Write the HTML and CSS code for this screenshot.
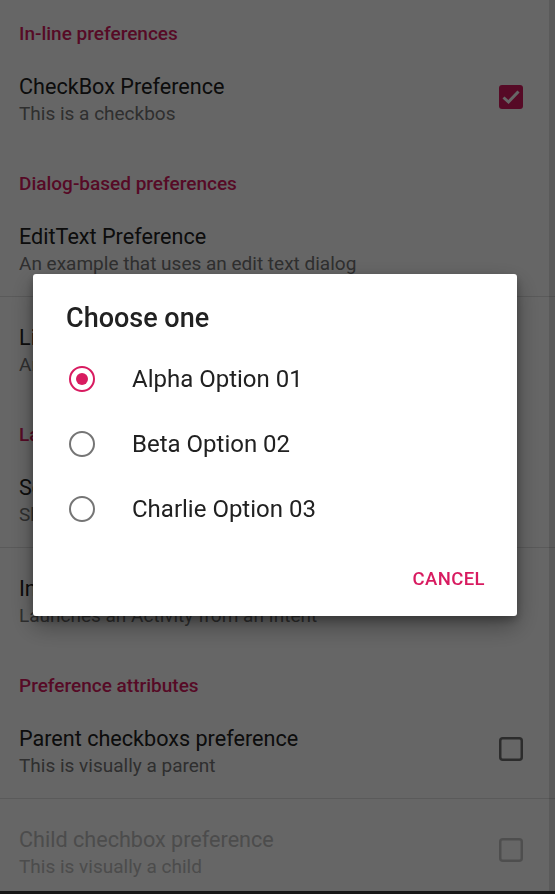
FILE: index.html
```html
<!DOCTYPE html>
<html>
<head>
<meta charset="utf-8">
<link rel="stylesheet" href="styles.css">
</head>
<body>
<div class="screen">
  <div class="list">
    <div class="category">In-line preferences</div>
    <div class="pref">
      <div class="pref-text">
        <div class="pref-title">CheckBox Preference</div>
        <div class="pref-summary">This is a checkbos</div>
      </div>
      <svg class="checkbox" width="24" height="24" viewBox="0 0 24 24">
        <rect x="0" y="0" width="24" height="24" rx="3" fill="#D81B60"/>
        <path d="M4.5 12.5 L9.5 17 L19.5 6.5" fill="none" stroke="#fff" stroke-width="3"/>
      </svg>
    </div>
    <div class="category">Dialog-based preferences</div>
    <div class="pref divided">
      <div class="pref-text">
        <div class="pref-title">EditText Preference</div>
        <div class="pref-summary">An example that uses an edit text dialog</div>
      </div>
    </div>
    <div class="pref">
      <div class="pref-text">
        <div class="pref-title">List Preference</div>
        <div class="pref-summary">An example that uses a list dialog</div>
      </div>
    </div>
    <div class="category">Launch preferences</div>
    <div class="pref divided">
      <div class="pref-text">
        <div class="pref-title">Screen preference</div>
        <div class="pref-summary">Shows another screen of preferences</div>
      </div>
    </div>
    <div class="pref">
      <div class="pref-text">
        <div class="pref-title">Intent preference</div>
        <div class="pref-summary">Launches an Activity from an Intent</div>
      </div>
    </div>
    <div class="category">Preference attributes</div>
    <div class="pref divided">
      <div class="pref-text">
        <div class="pref-title">Parent checkboxs preference</div>
        <div class="pref-summary">This is visually a parent</div>
      </div>
      <svg class="checkbox" width="24" height="24" viewBox="0 0 24 24">
        <rect x="1.25" y="1.25" width="21.5" height="21.5" rx="2.5" fill="none" stroke="#6e6e6e" stroke-width="2.5"/>
      </svg>
    </div>
    <div class="pref disabled">
      <div class="pref-text">
        <div class="pref-title">Child chechbox preference</div>
        <div class="pref-summary">This is visually a child</div>
      </div>
      <svg class="checkbox" width="24" height="24" viewBox="0 0 24 24">
        <rect x="1.25" y="1.25" width="21.5" height="21.5" rx="2.5" fill="none" stroke="#6e6e6e" stroke-width="2.5"/>
      </svg>
    </div>
  </div>
</div>

<div class="scrim"></div>
<div class="edge-right"></div>
<div class="edge-bottom"></div>

<div class="dialog">
  <div class="dialog-title">Choose one</div>
  <div class="options">
    <div class="option">
      <span class="radio checked"><span class="dot"></span></span>
      <span class="option-label">Alpha Option 01</span>
    </div>
    <div class="option">
      <span class="radio"></span>
      <span class="option-label">Beta Option 02</span>
    </div>
    <div class="option">
      <span class="radio"></span>
      <span class="option-label">Charlie Option 03</span>
    </div>
  </div>
  <div class="actions">
    <div class="btn">CANCEL</div>
  </div>
</div>
</body>
</html>
```

FILE: styles.css
```css
html, body {
  margin: 0;
  padding: 0;
  background: #ffffff;
  font-family: Roboto, "Noto Sans", sans-serif;
  overflow: hidden;
}

.screen {
  width: 555px;
  height: 894px;
  overflow: hidden;
}

.list {
  margin-top: -4px;
}

.category {
  height: 50px;
  box-sizing: border-box;
  padding: 27px 19px 0;
  font-size: 19px;
  line-height: 22px;
  font-weight: 500;
  color: #D81B60;
}

.pref {
  height: 100px;
  display: flex;
  align-items: center;
  padding: 0 32px 0 19px;
}

.pref.divided {
  border-bottom: 1px solid #e0e0e0;
}

.pref-text {
  flex: 1;
  display: flex;
  flex-direction: column;
  padding-top: 7px;
}

.pref-title {
  font-size: 21.6px;
  line-height: 27px;
  color: #212121;
  white-space: nowrap;
}

.pref-summary {
  font-size: 19px;
  line-height: 27px;
  color: #757575;
  white-space: nowrap;
}

.pref.disabled .pref-title,
.pref.disabled .pref-summary {
  color: #bdbdbd;
}

.pref.disabled .checkbox {
  opacity: 0.4;
}

.checkbox {
  flex: none;
  display: block;
  margin-top: 2px;
}

.scrim {
  position: fixed;
  inset: 0;
  background: rgba(0, 0, 0, 0.6);
}

.edge-right {
  position: fixed;
  top: 0;
  right: 0;
  width: 6px;
  height: 894px;
  background: rgba(0, 0, 0, 0.12);
}

.edge-bottom {
  position: fixed;
  left: 0;
  bottom: 0;
  width: 555px;
  height: 3px;
  background: #151515;
}

.dialog {
  position: fixed;
  left: 33px;
  top: 274px;
  width: 484px;
  height: 342px;
  box-sizing: border-box;
  background: #ffffff;
  border-radius: 3px;
  box-shadow: 0 10px 24px rgba(0, 0, 0, 0.35), 0 4px 8px rgba(0, 0, 0, 0.25);
  display: flex;
  flex-direction: column;
  padding: 30px 0 13px;
}

.dialog-title {
  padding: 0 33px;
  font-size: 27px;
  line-height: 28px;
  font-weight: 500;
  color: #212121;
}

.options {
  margin-top: 14.5px;
  display: flex;
  flex-direction: column;
}

.option {
  height: 65px;
  display: flex;
  align-items: center;
  padding-left: 36px;
}

.radio {
  width: 26px;
  height: 26px;
  box-sizing: border-box;
  border: 2.6px solid #757575;
  border-radius: 50%;
  display: flex;
  align-items: center;
  justify-content: center;
  flex: none;
}

.radio.checked {
  border-color: #D81B60;
}

.dot {
  width: 12px;
  height: 12px;
  border-radius: 50%;
  background: #D81B60;
}

.option-label {
  margin-left: 37px;
  font-size: 24px;
  color: #212121;
}

.actions {
  margin-top: 13.5px;
  height: 48px;
  display: flex;
  justify-content: flex-end;
  align-items: center;
  padding-right: 32px;
}

.btn {
  font-size: 18.5px;
  font-weight: 500;
  letter-spacing: 0.4px;
  color: #D81B60;
}
```
